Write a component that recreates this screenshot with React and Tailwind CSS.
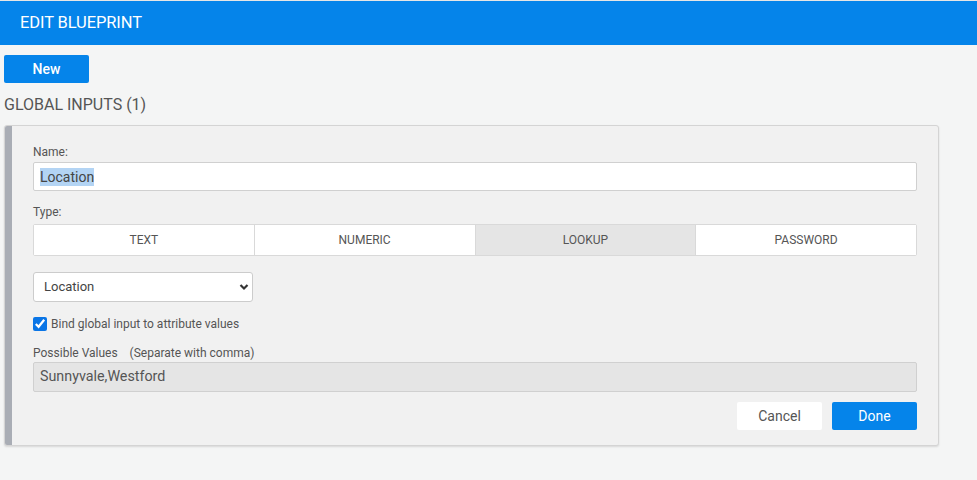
import React, { useState } from "react";

const types = ["TEXT", "NUMERIC", "LOOKUP", "PASSWORD"];

export default function App() {
  const [type, setType] = useState("LOOKUP");
  const [bind, setBind] = useState(true);

  return (
    <div
      className="min-h-[480px] bg-[#f4f5f5] text-[#555]"
      style={{ fontFamily: "Roboto, 'Liberation Sans', sans-serif" }}
    >
      {/* Header */}
      <div className="border-t border-[#e6e6e6] bg-[#0584ea] h-[45px] flex items-center px-5">
        <h1 className="text-white text-[16.5px] tracking-[-0.1px]">EDIT BLUEPRINT</h1>
      </div>

      <div className="px-1 pt-[10px]">
        <button className="w-[85px] h-[28px] bg-[#0584ea] text-white text-[14px] font-medium rounded-[2px]">
          New
        </button>

        <div className="mt-[12px] text-[16px] text-[#555] leading-[20px]">
          GLOBAL INPUTS (1)
        </div>

        {/* Card */}
        <div className="mt-[10px] w-[935px] h-[321px] bg-[#f1f1f1] border border-[#d4d4d4] rounded-[3px] shadow-[0_1px_2px_rgba(0,0,0,0.12)] flex">
          <div className="w-[7px] bg-[#a9adb5] rounded-l-[2px]" />
          <div className="flex-1 pl-[21px] pr-[21px] pt-[19px]">
            <label className="block text-[12px] leading-[14px] text-[#555]">Name:</label>
            <div className="mt-[3px] w-full h-[29px] bg-white border border-[#d0d0d0] rounded-[2px] px-[6px] flex items-center text-[14px] text-[#444]">
              <span className="bg-[#b3d4f4] leading-[18px]">Location</span>
            </div>

            <label className="block mt-[14px] text-[12px] leading-[14px] text-[#555]">Type:</label>
            <div className="mt-[5px] flex h-[32px] border border-[#d9d9d9] rounded-[2px] bg-white">
              {types.map((t, i) => (
                <button
                  key={t}
                  onClick={() => setType(t)}
                  className={`flex-1 text-[12px] text-[#555] ${i > 0 ? "border-l border-[#d9d9d9]" : ""} ${
                    type === t ? "bg-[#e5e5e5]" : "bg-white"
                  }`}
                >
                  {t}
                </button>
              ))}
            </div>

            <div className="mt-[16px] relative w-[220px]">
              <select className="appearance-none w-full h-[30px] bg-white border border-[#ccc] rounded-[3px] pl-[10px] text-[13px] text-[#444] outline-none">
                <option>Location</option>
              </select>
              <svg
                className="absolute right-[4px] top-[10px] pointer-events-none"
                width="10"
                height="10"
                viewBox="0 0 10 10"
              >
                <path d="M1.5 3 L5 6.5 L8.5 3" stroke="#333" strokeWidth="2.2" fill="none" />
              </svg>
            </div>

            <label className="mt-[13px] flex items-center gap-[4px] text-[12px] text-[#555]">
              <input
                type="checkbox"
                checked={bind}
                onChange={(e) => setBind(e.target.checked)}
                className="w-[14px] h-[14px] accent-[#0a75e6] m-0"
              />
              Bind global input to attribute values
            </label>

            <div className="mt-[13px] text-[12px] leading-[14px] text-[#555]">
              Possible Values <span className="ml-[9px]">(Separate with comma)</span>
            </div>
            <div className="mt-[2px] h-[30px] bg-[#e5e5e5] border border-[#d0d0d0] rounded-[2px] px-[6px] flex items-center text-[14.3px] text-[#555]">
              Sunnyvale,Westford
            </div>

            <div className="mt-[10px] flex justify-end gap-[10px]">
              <button className="w-[85px] h-[28px] bg-white text-[14px] text-[#555] rounded-[2px]">
                Cancel
              </button>
              <button className="w-[85px] h-[28px] bg-[#0584ea] text-white text-[14px] rounded-[2px]">
                Done
              </button>
            </div>
          </div>
        </div>
      </div>
    </div>
  );
}
